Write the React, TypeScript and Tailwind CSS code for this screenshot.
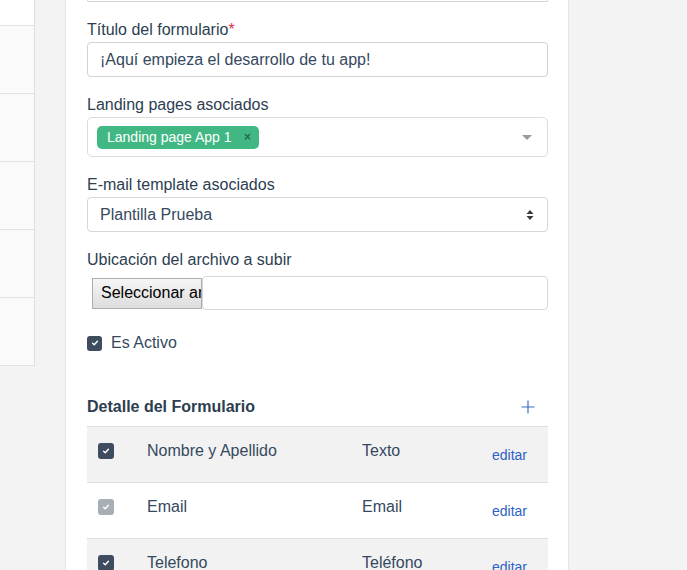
import React from 'react';

const font = { fontFamily: '"Liberation Sans", Arial, sans-serif' };

const Check: React.FC<{ muted?: boolean; size?: string }> = ({ muted, size = 'w-4 h-4' }) => (
  <span className={`${size} ${muted ? 'bg-[#a7aeb6]' : 'bg-[#3d4d5f]'} rounded-[3px] flex items-center justify-center shrink-0`}>
    <svg viewBox="0 0 10 10" className="w-[8px] h-[8px]">
      <path d="M2 5.2 L4.1 7.2 L8 2.8" stroke="#fff" strokeWidth="1.8" fill="none" strokeLinecap="round" strokeLinejoin="round" />
    </svg>
  </span>
);

const rows = [
  { name: 'Nombre y Apellido', type: 'Texto', on: true, bg: 'bg-[#f2f2f2]' },
  { name: 'Email', type: 'Email', on: false, bg: 'bg-white' },
  { name: 'Telefono', type: 'Teléfono', on: true, bg: 'bg-[#f2f2f2]' },
];

export default function App() {
  return (
    <div className="flex h-[570px] overflow-hidden bg-[#f3f3f3] text-[#2c3e50]" style={font}>
      {/* left list */}
      <div className="w-[35px] shrink-0 self-start border-r border-[#dedede]">
        <div className="h-[26px] bg-white border-b border-[#e2e2e2]" />
        {[0, 1, 2, 3, 4].map((i) => (
          <div key={i} className="h-[68px] bg-[#fafafa] border-b border-[#e2e2e2]" />
        ))}
      </div>

      {/* main card */}
      <div className="ml-[30px] w-[504px] shrink-0 bg-white border-x border-[#e6e6e6] pl-[21px] pr-[20px]">
        <div className="h-[2px] border-x border-b border-[#cfd3da] rounded-b-[4px]" />

        <label className="block mt-[18px] mb-[2px] text-[16px] leading-5">
          Título del formulario<span className="text-[#e0334c]">*</span>
        </label>
        <div className="h-[35px] border border-[#cfd3da] rounded-[4px] flex items-center pl-[12px] text-[16px] text-[#35495e]">
          ¡Aquí empieza el desarrollo de tu app!
        </div>

        <label className="block mt-[18px] mb-[2px] text-[16px] leading-5">Landing pages asociados</label>
        <div className="relative h-[40px] border border-[#dcdcdc] rounded-[5px] flex items-center pl-[9px]">
          <span className="h-[23px] w-[162px] rounded-[5px] bg-[#41b883] text-white text-[14px] flex items-center pl-[10px]">
            Landing page App 1
            <span className="ml-auto mr-[8px] text-[#266d4d] text-[12px] font-bold">×</span>
          </span>
          <svg viewBox="0 0 10 6" className="absolute right-[15px] top-[17px] w-[10px] h-[6px]">
            <path d="M0 0 L10 0 L5 5 Z" fill="#999" />
          </svg>
        </div>

        <label className="block mt-[18px] mb-[2px] text-[16px] leading-5">E-mail template asociados</label>
        <div className="relative h-[35px] border border-[#d4d7dc] rounded-[4px] flex items-center pl-[12px] text-[16px] text-[#35495e]">
          Plantilla Prueba
          <svg viewBox="0 0 8 12" className="absolute right-[13px] top-[11px] w-[8px] h-[12px]">
            <path d="M0.5 5 L4 1 L7.5 5 Z M0.5 7 L4 11 L7.5 7 Z" fill="#343a40" />
          </svg>
        </div>

        <label className="block mt-[18px] mb-[6px] text-[16px] leading-5">Ubicación del archivo a subir</label>
        <div className="flex items-center h-[34px]">
          <div className="ml-[5px] w-[110px] h-[31px] border border-[#adadad] bg-gradient-to-b from-[#f6f6f6] to-[#dddddd] text-[16px] text-black overflow-hidden whitespace-nowrap flex items-center pl-[8px]">
            Seleccionar archivo
          </div>
          <div className="flex-1 h-[34px] border border-[#d4d7dc] rounded-[4px] bg-white" />
        </div>

        <div className="mt-[23px] h-[20px] flex items-center text-[16px]">
          <Check size="w-[15px] h-[15px]" />
          <span className="ml-[9px] text-[#35495e]">Es Activo</span>
        </div>

        <div className="mt-[44px] h-[20px] flex items-center">
          <span className="text-[16px] font-bold text-[#2c3e50]">Detalle del Formulario</span>
          <svg viewBox="0 0 14 14" className="ml-auto mr-[13px] w-[14px] h-[14px]">
            <path d="M7 0.5 V13.5 M0.5 7 H13.5" stroke="#3b6fc6" strokeWidth="1.2" />
          </svg>
        </div>

        <div className="mt-[9px]">
          {rows.map((r) => (
            <div key={r.name} className={`${r.bg} h-[56px] border-t border-[#dedede] flex items-start text-[16px]`}>
              <div className="w-[60px] pl-[11px] pt-[16px]">
                <Check muted={!r.on} />
              </div>
              <div className="w-[215px] pt-[14px] leading-5 text-[#35495e]">{r.name}</div>
              <div className="w-[130px] pt-[14px] leading-5 text-[#35495e]">{r.type}</div>
              <div className="pt-[18px] leading-5 text-[14px] text-[#2b62c4]">editar</div>
            </div>
          ))}
        </div>
      </div>
    </div>
  );
}
